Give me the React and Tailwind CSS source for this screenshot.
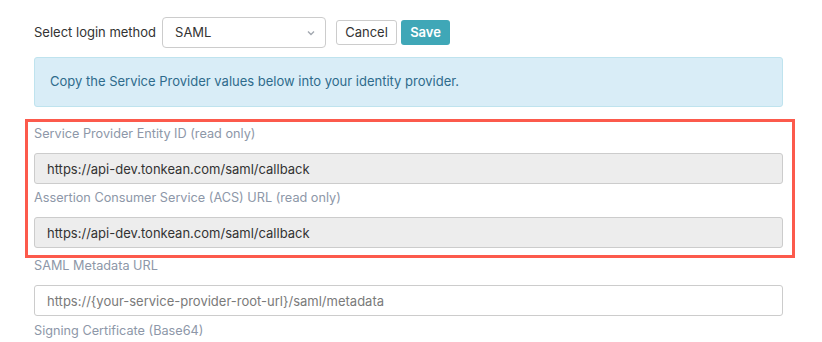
import React from "react";

const font = { fontFamily: "Inter, 'Noto Sans', sans-serif" };

function Field({ label, value, placeholder, readOnly }) {
  return (
    <div>
      <div className="text-[12.7px] leading-4 text-[#8d97a8]">{label}</div>
      <input
        readOnly={readOnly}
        defaultValue={value}
        placeholder={placeholder}
        className={`mt-[11px] block h-[31px] w-[749px] rounded-[3px] border border-[#cccccc] px-[12px] text-[13px] text-[#333333] placeholder:text-[#7a7a7a] outline-none ${
          readOnly ? "bg-[#ededed]" : "bg-white"
        }`}
      />
    </div>
  );
}

export default function App() {
  return (
    <div style={font} className="h-[342px] w-[822px] overflow-hidden bg-white pl-[34px] pt-[17px]">
      {/* login method row */}
      <div className="flex items-center">
        <span className="text-[13px] text-[#333333]">Select login method</span>
        <div className="ml-[6px] flex h-[31px] w-[164px] items-center justify-between rounded-[4px] border border-[#cccccc] pl-[12px] pr-[9px]">
          <span className="text-[13px] text-[#333333]">SAML</span>
          <svg width="10" height="10" viewBox="0 0 10 10" fill="none" stroke="#a3a8b0" strokeWidth="1.4">
            <path d="M2 3.5 L5 6.5 L8 3.5" />
          </svg>
        </div>
        <button className="ml-[10px] h-[25px] w-[61px] rounded-[3px] border border-[#cccccc] bg-white text-[13px] text-[#333333]">
          Cancel
        </button>
        <button className="ml-[4px] h-[25px] w-[49px] rounded-[3px] bg-[#3fa7b7] text-[13px] font-semibold text-white">
          Save
        </button>
      </div>

      {/* info alert */}
      <div className="mt-[9px] flex h-[50px] w-[749px] items-center rounded-[3px] border border-[#bfe3ee] bg-[#d9edf7] pl-[15px] text-[13px] text-[#2e6b8c]">
        Copy the Service Provider values below into your identity provider.
      </div>

      {/* highlighted read-only fields */}
      <div className="-ml-[9px] mt-[12px] w-[770px] border-[3px] border-[#fc5a4c] pb-[7px] pl-[6px] pt-[4px]">
        <Field
          label="Service Provider Entity ID (read only)"
          value="https://api-dev.tonkean.com/saml/callback"
          readOnly
        />
        <div className="mt-[6px]">
          <Field
            label="Assertion Consumer Service (ACS) URL (read only)"
            value="https://api-dev.tonkean.com/saml/callback"
            readOnly
          />
        </div>
      </div>

      <Field label="SAML Metadata URL" placeholder="https://{your-service-provider-root-url}/saml/metadata" />
      <div className="mt-[7px] text-[12.7px] leading-4 text-[#8d97a8]">Signing Certificate (Base64)</div>
    </div>
  );
}
